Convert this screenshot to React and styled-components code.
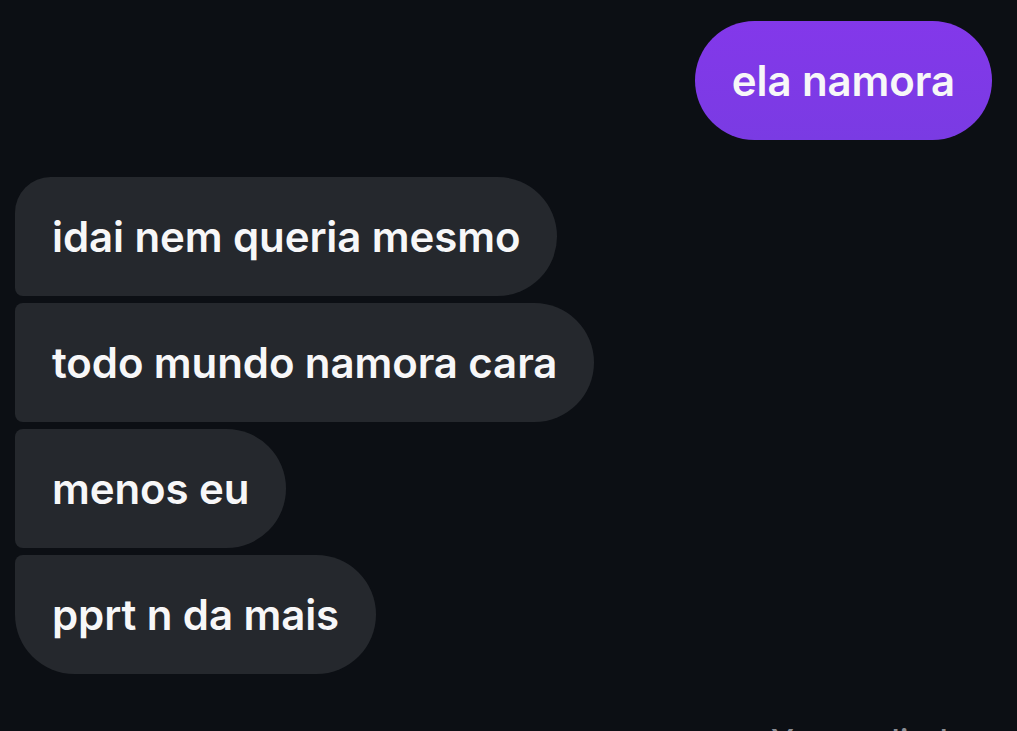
import styled, { createGlobalStyle } from 'styled-components'

const GlobalStyle = createGlobalStyle`
  html, body {
    margin: 0;
    padding: 0;
    background: #0c0f14;
    height: 731px;
    overflow: hidden;
  }
  * { box-sizing: border-box; }
`

const Thread = styled.div`
  display: flex;
  flex-direction: column;
  padding: 21px 25px 0 15px;
  font-family: Inter, "Noto Sans", sans-serif;
`

const Group = styled.div`
  display: flex;
  flex-direction: column;
  align-items: ${p => (p.$mine ? 'flex-end' : 'flex-start')};
  gap: 7px;
  margin-bottom: ${p => p.$space || 0}px;
`

const Bubble = styled.div`
  height: 119px;
  display: flex;
  align-items: center;
  padding: 0 37px;
  font-size: 42px;
  font-weight: 600;
  letter-spacing: -0.1px;
  color: #f7f7f8;
  white-space: nowrap;
  background: ${p => (p.$mine ? 'linear-gradient(180deg, #8338ea 0%, #7a3be3 100%)' : '#25282d')};
  border-radius: ${p => p.$radius};
`

const Footer = styled.div`
  display: flex;
  justify-content: flex-end;
  padding-right: 44px;
  font-size: 33px;
  font-weight: 500;
  line-height: 38px;
  color: #8b8e94;
`

const radiusFor = (i, n) => {
  const top = i === 0 ? '36px' : '8px'
  const bottom = i === n - 1 ? '60px' : '8px'
  return `${top} 60px 60px ${bottom}`
}

const theirs = ['idai nem queria mesmo', 'todo mundo namora cara', 'menos eu', 'pprt n da mais']

export default function App() {
  return (
    <>
      <GlobalStyle />
      <Thread>
        <Group $mine $space={37}>
          <Bubble $mine $radius="60px">ela namora</Bubble>
        </Group>
        <Group $space={48}>
          {theirs.map((t, i) => (
            <Bubble key={t} $radius={radiusFor(i, theirs.length)}>{t}</Bubble>
          ))}
        </Group>
        <Footer>You replied</Footer>
      </Thread>
    </>
  )
}
